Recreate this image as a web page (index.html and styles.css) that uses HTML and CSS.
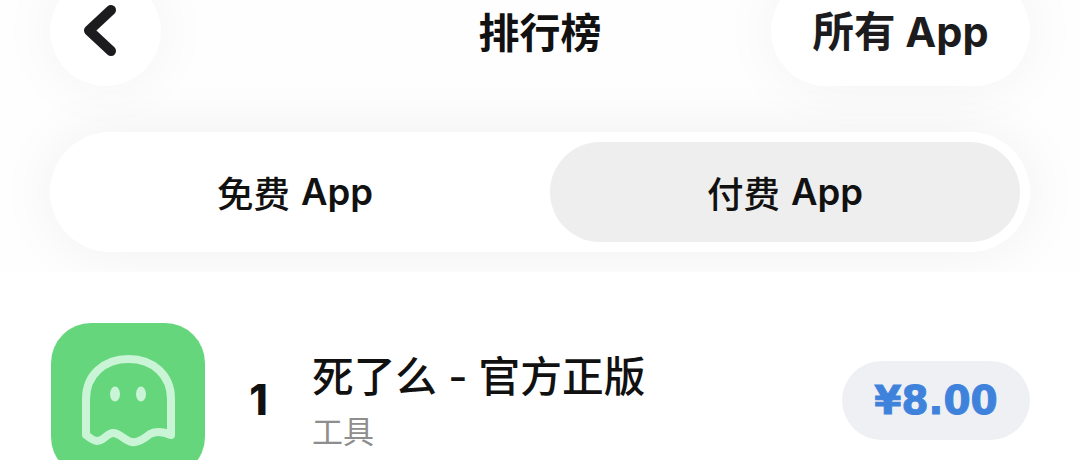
FILE: index.html
```html
<!DOCTYPE html>
<html lang="zh-CN">
<head>
    <meta charset="UTF-8">
    <meta name="viewport" content="width=device-width, initial-scale=1.0">
    <title>排行榜</title>
    <link rel="stylesheet" href="styles.css">
</head>
<body>
    <div class="top">
        <div class="header">
            <button class="back">
                <svg width="34" height="52" viewBox="0 0 34 52"><path d="M28 5 L6 25.5 L28 46" fill="none" stroke="#1c1c1e" stroke-width="10" stroke-linecap="round" stroke-linejoin="round"/></svg>
            </button>
            <div class="title">排行榜</div>
            <button class="all">所有 App</button>
        </div>
        <div class="tabs">
            <div class="tab">免费 <span class="latin">App</span></div>
            <div class="tab active">付费 <span class="latin">App</span></div>
        </div>
    </div>
    <div class="row">
        <div class="icon">
            <svg width="100" height="96" viewBox="0 0 100 96">
                <path d="M8 82 V46 C8 22 26 6 50.5 6 C75 6 93 22 93 46 V82 C86 79 78 78 72 81 C66 86 60 90 54 89 C47 88 42 80 35 80 C29 80 26 88 19 88 C15 88 11 84 8 82 Z" fill="none" stroke="#c9f5d6" stroke-width="8" stroke-linejoin="round"/>
                <ellipse cx="37" cy="41" rx="5" ry="7.5" fill="#c9f5d6"/>
                <ellipse cx="63" cy="41" rx="5" ry="7.5" fill="#c9f5d6"/>
            </svg>
        </div>
        <div class="rank">1</div>
        <div class="info">
            <div class="name">死了么 - 官方正版</div>
            <div class="category">工具</div>
        </div>
        <div class="price">¥8.00</div>
    </div>
</body>
</html>
```

FILE: styles.css
```css
body { margin: 0; height: 460px; overflow: hidden; background-color: #fff; font-family: Inter, "Noto Sans CJK SC", sans-serif; color: #1c1c1e; }
button { border: none; padding: 0; font: inherit; color: inherit; }

.top { display: flow-root; height: 272px; padding: 0 50px; box-sizing: border-box; overflow: hidden; background-color: #fefefe; }
.header { display: grid; grid-template-columns: 1fr auto 1fr; align-items: center; height: 110px; margin-top: -24px; }
.back { width: 111px; height: 110px; border-radius: 50%; background-color: #fff; display: flex; align-items: center; justify-content: center; padding-right: 12px; box-shadow: 0 0 60px rgba(0,0,0,0.05); }
.title { font-size: 41px; font-weight: 700; color: #111; margin-top: -2px; }
.all { justify-self: end; width: 259px; height: 110px; padding-bottom: 4px; border-radius: 55px; background-color: #fff; font-size: 41.5px; font-weight: 700; box-shadow: 0 0 60px rgba(0,0,0,0.05); }

.tabs { display: flex; justify-content: space-between; height: 120px; margin-top: 46px; padding: 10px; box-sizing: border-box; border-radius: 60px; background-color: #fff; box-shadow: 0 0 60px rgba(0,0,0,0.06); }
.tab { width: 470px; display: flex; align-items: center; justify-content: center; gap: 0.3em; box-sizing: border-box; font-size: 36.5px; font-weight: 500; color: #111; border-radius: 50px; }
.tab.active { background-color: #eee; }
.latin { font-weight: 600; }

.row { display: flex; align-items: flex-start; padding: 51px 50px 0 51px; }
.icon { width: 154px; height: 154px; flex: none; border-radius: 40px; background-color: #66d67c; display: flex; justify-content: center; padding-top: 30px; box-sizing: border-box; }
.rank { width: 107px; margin-top: 51px; text-align: center; font-size: 42px; font-weight: 800; color: #111; }
.info { flex: 1; margin-top: 26px; }
.name { font-size: 41.7px; font-weight: 500; line-height: 56px; color: #111; }
.category { font-size: 31px; line-height: 44px; margin-top: 5px; color: #8e8e8e; }
.price { width: 188px; height: 79px; margin-top: 38px; border-radius: 40px; background-color: #eff0f4; color: #3f82dc; display: flex; align-items: center; justify-content: center; font-family: "DejaVu Sans", sans-serif; font-size: 39px; font-weight: 700; -webkit-text-stroke: 1px #3f82dc; }
```
